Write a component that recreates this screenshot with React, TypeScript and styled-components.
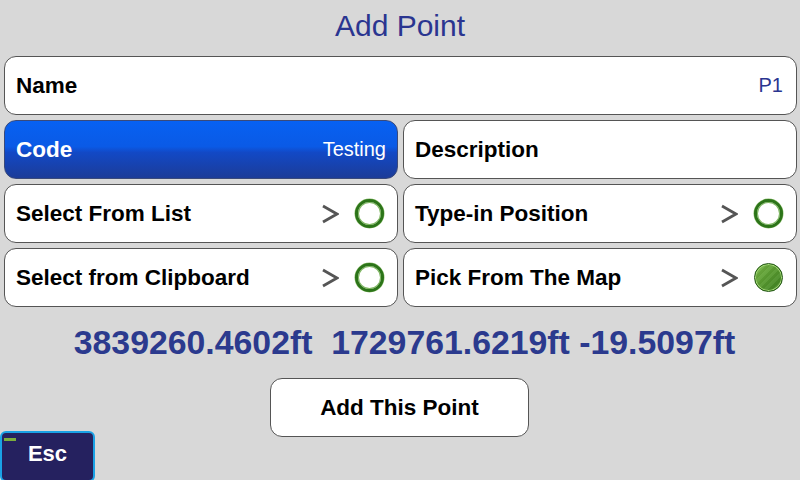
import React from 'react';
import styled, { createGlobalStyle } from 'styled-components';

const GlobalStyle = createGlobalStyle`
  html, body {
    margin: 0;
    padding: 0;
    background: #d8d8d8;
  }
  body {
    font-family: 'Liberation Sans', Arial, sans-serif;
  }
`;

const Screen = styled.div`
  position: relative;
  width: 800px;
  height: 480px;
  background: #d8d8d8;
  display: flex;
  flex-direction: column;
  overflow: hidden;
`;

const Title = styled.h1`
  margin: 0;
  flex-shrink: 0;
  height: 56px;
  display: flex;
  align-items: center;
  justify-content: center;
  font-size: 30px;
  font-weight: 400;
  color: #2a3590;
  padding-bottom: 4px;
  box-sizing: border-box;
`;

const Rows = styled.div`
  flex-shrink: 0;
  display: grid;
  grid-template-columns: 394px 394px;
  grid-auto-rows: 59px;
  gap: 5px;
  padding: 0 4px;
`;

const Field = styled.div<{ $wide?: boolean; $active?: boolean }>`
  grid-column: ${(p) => (p.$wide ? '1 / span 2' : 'auto')};
  box-sizing: border-box;
  border: 1.5px solid #555;
  border-radius: 12px;
  display: flex;
  align-items: center;
  padding: 0 12px 0 11px;
  background: ${(p) =>
    p.$active
      ? 'linear-gradient(to bottom, #0761f2 0%, #0a5ae6 45%, #1249c6 55%, #1c3c98 100%)'
      : '#fff'};
  color: ${(p) => (p.$active ? '#fff' : '#000')};
  border-color: ${(p) => (p.$active ? '#3a4a7a' : '#555')};
`;

const Label = styled.span`
  flex: 1;
  font-size: 22.5px;
  font-weight: 700;
  white-space: nowrap;
`;

const Value = styled.span<{ $light?: boolean }>`
  font-size: 20px;
  color: ${(p) => (p.$light ? '#fff' : '#2a3590')};
  margin-right: ${(p) => (p.$light ? '-1px' : '1px')};
`;

const Chevron = styled.svg`
  width: 18px;
  height: 20px;
  margin-right: 16px;
`;

const Radio = styled.span<{ $on?: boolean }>`
  width: 29px;
  height: 29px;
  margin-right: 1px;
  box-sizing: border-box;
  border-radius: 50%;
  border: ${(p) => (p.$on ? '1.5px solid #1e5410' : '3px solid #2c7419')};
  background: ${(p) =>
    p.$on
      ? 'repeating-linear-gradient(135deg, rgba(255,255,255,0.05) 0px, rgba(255,255,255,0.05) 3px, rgba(0,0,0,0.04) 3px, rgba(0,0,0,0.04) 6px), linear-gradient(135deg, #7cba4a 0%, #57992f 50%, #3a7c1e 100%)'
      : '#fff'};
  box-shadow: ${(p) =>
    p.$on
      ? 'inset 0 0 0 1px #a6d77a'
      : 'inset 0 0 0 1px #7fb860, 0 0 0 0.5px #8fbf70'};
`;

const Coords = styled.div`
  flex-shrink: 0;
  margin-top: 15px;
  padding-left: 9px;
  text-align: center;
  font-size: 33.8px;
  font-weight: 700;
  color: #2b3a8e;
  white-space: pre;
  height: 40px;
  line-height: 40px;
`;

const AddButton = styled.button`
  flex-shrink: 0;
  align-self: center;
  width: 259px;
  height: 59px;
  margin-top: 16px;
  margin-left: -1px;
  border: 1.5px solid #555;
  border-radius: 12px;
  background: #fff;
  font-family: 'Liberation Sans', Arial, sans-serif;
  font-size: 22.5px;
  font-weight: 700;
  color: #000;
`;

const EscButton = styled.button`
  position: absolute;
  left: 0;
  bottom: -2px;
  width: 95px;
  height: 51px;
  box-sizing: border-box;
  border: 2px solid #1aa2e6;
  border-radius: 6px;
  background: #25215f;
  color: #fff;
  font-family: 'Liberation Sans', Arial, sans-serif;
  font-size: 22px;
  font-weight: 700;
  padding: 0 0 6px 0;
`;

const EscMark = styled.span`
  position: absolute;
  left: 2px;
  top: 5px;
  width: 12px;
  height: 3px;
  background: #7cad3c;
`;

const Arrow = () => (
  <Chevron viewBox="0 0 18 20">
    <path d="M2 2 L16 10 L2 18" fill="none" stroke="#555" strokeWidth="2.8" />
  </Chevron>
);

const PICKS = [
  { id: 1, label: 'Select From List', on: false },
  { id: 2, label: 'Type-in Position', on: false },
  { id: 3, label: 'Select from Clipboard', on: false },
  { id: 4, label: 'Pick From The Map', on: true },
];

const App = () => {
  return (
    <Screen>
      <GlobalStyle />
      <Title>Add Point</Title>
      <Rows>
        <Field $wide>
          <Label>Name</Label>
          <Value>P1</Value>
        </Field>
        <Field $active>
          <Label>Code</Label>
          <Value $light>Testing</Value>
        </Field>
        <Field>
          <Label>Description</Label>
        </Field>
        {PICKS.map((pick) => (
          <Field key={pick.id}>
            <Label>{pick.label}</Label>
            <Arrow />
            <Radio $on={pick.on} />
          </Field>
        ))}
      </Rows>
      <Coords>{'3839260.4602ft  1729761.6219ft -19.5097ft'}</Coords>
      <AddButton>Add This Point</AddButton>
      <EscButton>
        <EscMark />
        Esc
      </EscButton>
    </Screen>
  );
};

export default App;
